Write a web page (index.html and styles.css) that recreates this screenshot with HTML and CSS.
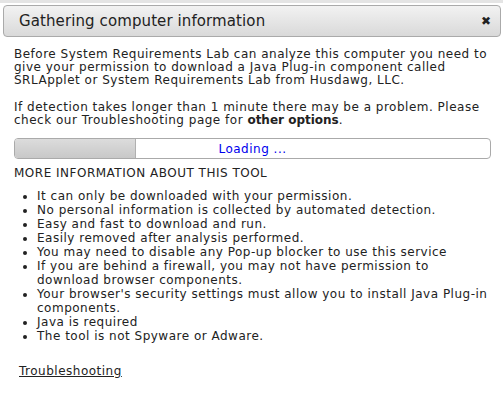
FILE: index.html
```html
<!DOCTYPE html>
<html>
<head>
<meta charset="utf-8">
<link rel="stylesheet" href="styles.css">
</head>
<body>
<div class="topstrip"></div>
<div class="dialog">
  <div class="titlebar">
    <span class="title">Gathering computer information</span>
    <span class="close">&#x2716;</span>
  </div>
  <div class="content">
    <p class="para">Before System Requirements Lab can analyze this computer you need to give your permission to download a Java Plug-in component called SRLApplet or System Requirements Lab from Husdawg, LLC.</p>
    <p class="para">If detection takes longer than 1 minute there may be a problem. Please check our Troubleshooting page for <b class="strong">other options</b>.</p>
    <div class="progress">
      <div class="fill"></div>
      <div class="label">Loading ...</div>
    </div>
    <div class="more">MORE INFORMATION ABOUT THIS TOOL</div>
    <ul class="info">
      <li>It can only be downloaded with your permission.</li>
      <li>No personal information is collected by automated detection.</li>
      <li>Easy and fast to download and run.</li>
      <li>Easily removed after analysis performed.</li>
      <li>You may need to disable any Pop-up blocker to use this service</li>
      <li>If you are behind a firewall, you may not have permission to download browser components.</li>
      <li>Your browser's security settings must allow you to install Java Plug-in components.</li>
      <li>Java is required</li>
      <li>The tool is not Spyware or Adware.</li>
    </ul>
    <a class="trouble" href="#">Troubleshooting</a>
  </div>
</div>
</body>
</html>
```
FILE: styles.css
```css
html, body {
  margin: 0;
  padding: 0;
  background: #fff;
}
body {
  font-family: "DejaVu Sans", Verdana, sans-serif;
  font-size: 12px;
  letter-spacing: 0.5px;
  color: #222;
  width: 503px;
  height: 403px;
  overflow: hidden;
}
.topstrip {
  height: 3px;
  background: #e4e4e4;
}
.dialog {
  padding: 2px 2px 0 3px;
}
.titlebar {
  height: 30px;
  border: 1px solid #aaa;
  border-radius: 4px;
  background: linear-gradient(#f2f2f2, #d9d9d9);
  display: flex;
  align-items: center;
  justify-content: space-between;
  padding: 0 9px 0 15px;
}
.title {
  font-size: 15px;
  letter-spacing: 0.1px;
  color: #222;
}
.close {
  font-size: 12px;
  letter-spacing: 0;
  color: #222;
  font-weight: bold;
}
.content {
  padding: 0 10px 0 11px;
}
.para {
  margin: 11px 0 0 0;
  line-height: 13px;
}
.para + .para {
  margin-top: 14px;
}
.strong {
  letter-spacing: 0;
}
.progress {
  margin-top: 11px;
  height: 19px;
  border: 1px solid #aaa;
  border-radius: 4px;
  position: relative;
  overflow: hidden;
  display: flex;
  align-items: center;
  justify-content: center;
}
.fill {
  position: absolute;
  left: 0;
  top: 0;
  bottom: 0;
  width: 120px;
  background: linear-gradient(#dcdcdc, #c8c8c8);
  border-right: 1px solid #b0b0b0;
}
.label {
  position: relative;
  color: #0000ee;
}
.more {
  margin-top: 8px;
  line-height: 13px;
}
.info {
  margin: 9px 0 0 0;
  padding-left: 23px;
  line-height: 14px;
}
.trouble {
  display: inline-block;
  margin: 21px 0 0 5px;
  color: #222;
  text-decoration: underline;
  line-height: 14px;
}
```
